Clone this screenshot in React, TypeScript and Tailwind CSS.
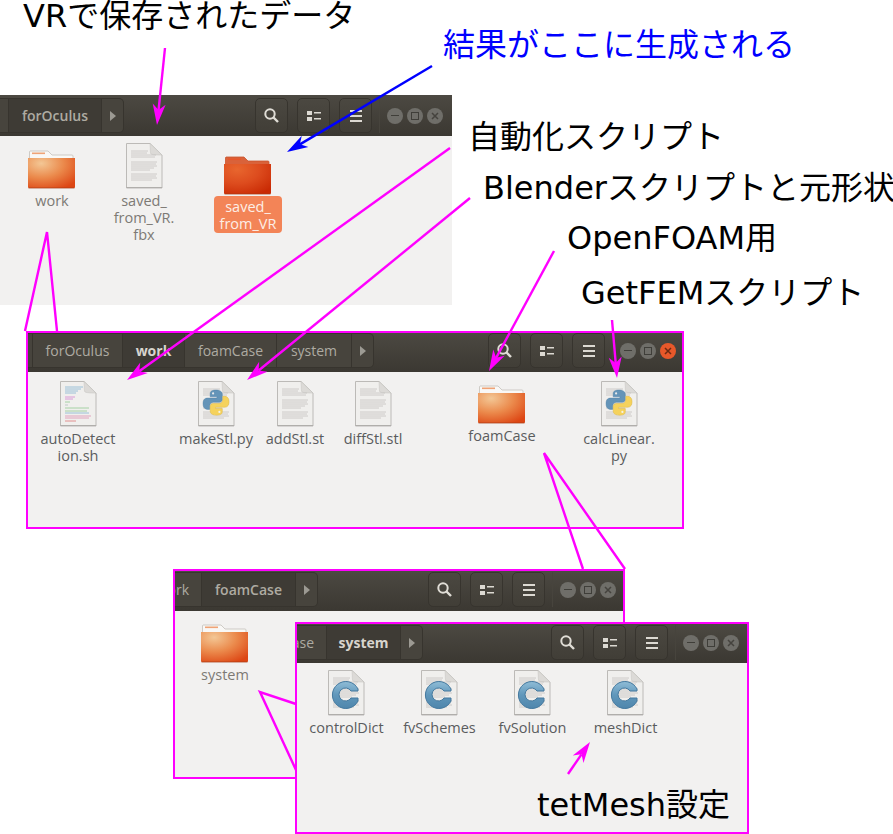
import React from "react";

const DEJAVU = { fontFamily: '"DejaVu Sans","Noto Sans CJK JP",sans-serif' };
const UI = { fontFamily: '"Open Sans",sans-serif' };

function Folder({ selected = false }: { selected?: boolean }) {
  const id = selected ? "s" : "n";
  return (
    <svg width="50" height="40" viewBox="0 0 50 40">
      <defs>
        <radialGradient id={`fg${id}`} cx="0.28" cy="0.18" r="0.95">
          <stop offset="0" stopColor={selected ? "#e8662e" : "#f3c795"} />
          <stop offset="0.5" stopColor={selected ? "#dd4c1e" : "#eb8a4c"} />
          <stop offset="1" stopColor={selected ? "#c92a04" : "#dd4614"} />
        </radialGradient>
      </defs>
      <path
        d="M3 2 H21 L25 6 H45 a1 1 0 0 1 1 1 V12 H2.500 V3 a1 1 0 0 1 .5-1z"
        fill={selected ? "#d9623a" : "#f9f8f6"}
        stroke={selected ? "#c9552e" : "#c4c0ba"}
        strokeWidth="0.8"
      />
      <rect x="5" y="3.500" width="13" height="1.600" fill={selected ? "#e8562a" : "#efa376"} />
      <path d="M1 9 H48 V38 a1 1 0 0 1-1 1 H2 a1 1 0 0 1-1-1z" fill={`url(#fg${id})`} />
      <path d="M1.500 39 H47.500" stroke="#a83c14" strokeWidth="1" opacity="0.75" />
    </svg>
  );
}

function PageBase({ children }: { children?: React.ReactNode }) {
  return (
    <svg width="37" height="46" viewBox="0 0 37 46">
      <path d="M.5 .5 H24 L36 12 V45 H.5z" fill="#f0efed" stroke="#bcbab7" strokeWidth="1" />
      <path d="M.5 44.500 H36" stroke="#b0aeab" strokeWidth="1.200" />
      <path d="M24 .5 C24.500 6 24 10 25 11 C27 12 32 12 36 12z" fill="#dcdad7" stroke="#c9c7c4" strokeWidth="0.6" />
      {children}
    </svg>
  );
}

function TextLines() {
  const rows: [number, number][] = [
    [8, 22], [10, 21], [12, 30], [14, 29],
    [19, 31], [21, 30], [23, 31], [25, 28], [27, 24],
    [31, 31], [33, 30], [35, 31], [37, 26],
  ];
  return (
    <g stroke="#c4c2bf" strokeWidth="0.8">
      {rows.map(([y, x2]) => (
        <line key={y} x1="5" x2={x2} y1={y} y2={y} />
      ))}
    </g>
  );
}

function TextIcon() {
  return (
    <PageBase>
      <TextLines />
    </PageBase>
  );
}

function ScriptIcon() {
  const rows: [number, string, number][] = [
    [6, "#5aa0c8", 18], [8, "#5aa0c8", 16], [10, "#5aa0c8", 13], [12, "#5aa0c8", 11],
    [16, "#c95cc8", 10], [18, "#c95cc8", 8], [21, "#6dbb6d", 5], [24, "#9aa", 3],
    [27, "#6dbb6d", 24], [30, "#6dbb6d", 22], [32, "#5aa0c8", 24], [35, "#d66a9a", 26],
    [37, "#d66a9a", 24], [40, "#d84a4a", 11],
  ];
  return (
    <PageBase>
      <g strokeWidth="0.8" opacity="0.7">
        {rows.map(([y, c, w]) => (
          <line key={y} x1="5" x2={5 + w} y1={y} y2={y} stroke={c} />
        ))}
      </g>
    </PageBase>
  );
}

function PyIcon() {
  return (
    <PageBase>
      <TextLines />
      <g transform="translate(2.500 1.500) scale(0.84)">
        <path d="M18.500 9 c-7 0-7 3-7 5 v3 h8 v1.500 H8 c-3.500 0-5 3-5 6.500 s1.500 7 5 7 h3 v-4 c0-2.500 2-4.500 4.500-4.500 h7 c2 0 3.500-1.500 3.500-3.500 V14 c0-3-3-5-7.500-5z" fill="#6494b8" stroke="#4d7fa5" strokeWidth="0.5" />
        <circle cx="15" cy="13" r="1.300" fill="#e8eaec" />
        <path d="M19 39 c7 0 7-3 7-5 v-3 h-8 v-1.500 h11 c3.500 0 5-3 5-6.500 s-1.500-6.500-5-6.500 h-2.500 v4 c0 2.500-2 4.500-4.500 4.500 h-7 c-2 0-3.500 1.500-3.500 3.500 V34 c0 3 3 5 7.500 5z" fill="#f5d25c" stroke="#d9b240" strokeWidth="0.5" />
        <circle cx="22.500" cy="35" r="1.300" fill="#f4f2e8" />
      </g>
    </PageBase>
  );
}

function CIcon() {
  return (
    <PageBase>
      <TextLines />
      <defs>
        <linearGradient id="cg" x1="0" y1="0" x2="0" y2="1">
          <stop offset="0" stopColor="#8fbcd6" />
          <stop offset="0.5" stopColor="#6097bb" />
          <stop offset="1" stopColor="#4f86ac" />
        </linearGradient>
      </defs>
      <path
        d="M30 19 A13.500 13.500 0 1 0 30 31 V28 H23 A6.500 6.500 0 1 1 23 21 H30z"
        fill="url(#cg)"
        stroke="#44799f"
        strokeWidth="1"
      />
    </PageBase>
  );
}

function FileItem({
  icon, label, selected = false, dark = false, className = "",
}: {
  icon: React.ReactNode; label: string; selected?: boolean; dark?: boolean; className?: string;
}) {
  return (
    <div className={`flex flex-col items-center ${className}`}>
      {icon}
      <div
        className={`whitespace-pre-line text-center text-[14.500px] leading-[17px] ${
          selected
            ? "mt-[1px] w-[68px] rounded bg-[#f38457] pb-[1px] pt-[2px] text-[#fdeee6]"
            : dark
              ? "mt-[3px] whitespace-nowrap text-[#5a5c5e]"
              : "mt-[3px] text-[#7d7a75]"
        }`}
        style={UI}
      >
        {label}
      </div>
    </div>
  );
}

function HBtn({ children }: { children: React.ReactNode }) {
  return (
    <div className="flex h-[35px] w-[33px] items-center justify-center rounded-[5px] border border-[#37342e] bg-gradient-to-b from-[#4b4841] to-[#413e37]">
      {children}
    </div>
  );
}

function Header({
  crumbs, active = false, heightClass, padClass, ctrlClass,
}: {
  crumbs: React.ReactNode; active?: boolean; heightClass: string; padClass: string; ctrlClass: string;
}) {
  const dim = "bg-[#6f6e69] text-[#3f3e39]";
  return (
    <div className={`flex shrink-0 items-end bg-gradient-to-b from-[#4c4942] to-[#3b3832] ${heightClass} ${padClass}`}>
      {crumbs}
      <div className="flex-1" />
      <div className="flex items-center gap-[9px]">
        <HBtn>
          <svg width="17" height="17" viewBox="0 0 17 17" fill="none" stroke="#e0ddd6" strokeWidth="2">
            <circle cx="7" cy="7" r="4.700" />
            <path d="M10.500 10.500 L15 15" strokeWidth="2.400" />
          </svg>
        </HBtn>
        <HBtn>
          <svg width="14" height="12" viewBox="0 0 14 12" fill="#dcd9d2">
            <rect x="0" y="1" width="5" height="4" />
            <rect x="0" y="7" width="5" height="4" />
            <rect x="7" y="2" width="7" height="1.500" />
            <rect x="7" y="8" width="7" height="1.500" />
          </svg>
        </HBtn>
        <HBtn>
          <svg width="12" height="12" viewBox="0 0 12 12" fill="#dcd9d2">
            <rect y="0" width="12" height="2" />
            <rect y="5" width="12" height="2" />
            <rect y="10" width="12" height="2" />
          </svg>
        </HBtn>
      </div>
      <div className={`ml-[7px] flex h-[35px] items-center gap-[4px] border-l border-[#47443d] pl-[7px] ${ctrlClass}`}>
        <div className={`flex size-[16px] items-center justify-center rounded-full ${dim}`}>
          <div className="h-[1.500px] w-[8px] bg-current" />
        </div>
        <div className={`flex size-[16px] items-center justify-center rounded-full ${dim}`}>
          <div className="size-[8px] border border-current" />
        </div>
        <div className={`flex size-[16px] items-center justify-center rounded-full ${active ? "bg-[#e8582a] text-[#6d2a12]" : "bg-[#6f6e69] text-[#45433e]"}`}>
          <svg width="8" height="8" viewBox="0 0 8 8" stroke="currentColor" strokeWidth="1.500">
            <path d="M1 1 L7 7 M7 1 L1 7" />
          </svg>
        </div>
      </div>
    </div>
  );
}

function Crumb({
  label, tone = "plain", widthClass, clipClass = "justify-center",
}: {
  label?: string; tone?: "plain" | "current" | "currentDim"; widthClass: string; clipClass?: string;
}) {
  const toneClass =
    tone === "current"
      ? "bg-[#3e3b35] font-bold text-[#d8d5ce]"
      : tone === "currentDim"
        ? "bg-[#3e3b35] font-semibold text-[#aeaba2]"
        : "bg-[#47443d] text-[#aeaba2]";
  return (
    <div
      className={`flex h-[35px] shrink-0 items-center overflow-hidden whitespace-nowrap border-y border-r border-[#37342e] text-[14px] ${toneClass} ${widthClass} ${clipClass}`}
      style={UI}
    >
      {label}
    </div>
  );
}

function Arrow() {
  return (
    <div className="flex h-[35px] w-[22px] shrink-0 items-center justify-center rounded-r-[5px] border border-l-0 border-[#37342e] bg-[#47443d]">
      <div className="h-0 w-0 border-y-[5px] border-l-[6px] border-y-transparent border-l-[#9c9a93]" />
    </div>
  );
}

function Win({
  x, y, w, h, border = false, children, header,
}: {
  x: number; y: number; w: number; h: number; border?: boolean; children: React.ReactNode; header: React.ReactNode;
}) {
  return (
    <div
      className={`absolute flex flex-col overflow-hidden bg-[#f2f1f0] ${border ? "border-2 border-[#ff00ff]" : ""}`}
      style={{ left: x, top: y, width: w, height: h }}
    >
      {header}
      <div className="flex-1">{children}</div>
    </div>
  );
}

function Note({ x, y, text, blue = false }: { x: number; y: number; text: string; blue?: boolean }) {
  return (
    <div
      className={`absolute whitespace-nowrap text-[32px] leading-[30px] ${blue ? "text-[#0000ff]" : "text-black"}`}
      style={{ left: x, top: y, ...DEJAVU }}
    >
      {text}
    </div>
  );
}

function Line({ p }: { p: string }) {
  return <polyline points={p} fill="none" stroke="#ff00ff" strokeWidth="2.400" />;
}

function Head({ x1, y1, x2, y2, c = "#ff00ff" }: { x1: number; y1: number; x2: number; y2: number; c?: string }) {
  const a = Math.atan2(y2 - y1, x2 - x1);
  const L = 21;
  const W = 6.5;
  const n = 15;
  const bx = x2 - L * Math.cos(a);
  const by = y2 - L * Math.sin(a);
  const mx = x2 - n * Math.cos(a);
  const my = y2 - n * Math.sin(a);
  const px = -Math.sin(a) * W;
  const py = Math.cos(a) * W;
  return (
    <>
      <line x1={x1} y1={y1} x2={mx} y2={my} stroke={c} strokeWidth="2.400" />
      <polygon points={`${x2},${y2} ${bx + px},${by + py} ${mx},${my} ${bx - px},${by - py}`} fill={c} />
    </>
  );
}

export default function App() {
  return (
    <div className="relative h-[834px] w-[893px] overflow-hidden bg-white">
      <Win
        x={0} y={95} w={452} h={210}
        header={
          <Header
            heightClass="h-[41px]" padClass="pb-[3px]" ctrlClass="mr-[9px]"
            crumbs={
              <div className="flex">
                <Crumb widthClass="w-[9px]" />
                <Crumb label="forOculus" tone="currentDim" widthClass="w-[93px]" />
                <Arrow />
              </div>
            }
          />
        }
      >
        <div className="flex items-start">
          <FileItem className="ml-[12px] mt-[13px] w-[80px]" icon={<Folder />} label="work" />
          <FileItem className="ml-[12px] mt-[7px] w-[80px]" icon={<TextIcon />} label={"saved_\nfrom_VR.\nfbx"} />
          <FileItem className="ml-[24px] mt-[19px] w-[80px]" icon={<Folder selected />} label={"saved_\nfrom_VR"} selected />
        </div>
      </Win>

      <Win
        x={173} y={569} w={452} h={210} border
        header={
          <Header
            heightClass="h-[40px]" padClass="pb-[4px]" ctrlClass="mr-[7px]"
            crumbs={
              <div className="flex">
                <Crumb label="ork" widthClass="w-[27px]" clipClass="justify-end pr-[12px]" />
                <Crumb label="foamCase" tone="currentDim" widthClass="w-[94px]" />
                <Arrow />
              </div>
            }
          />
        }
      >
        <FileItem className="ml-[10px] mt-[12px] w-[80px]" icon={<Folder />} label="system" />
      </Win>

      <Win
        x={295} y={622} w={454} h={212} border
        header={
          <Header
            heightClass="h-[39px]" padClass="pb-[3px]" ctrlClass="mr-[8px]"
            crumbs={
              <div className="flex">
                <Crumb label="ase" widthClass="w-[30px]" clipClass="justify-end pr-[12px]" />
                <Crumb label="system" tone="current" widthClass="w-[74px]" />
                <Arrow />
              </div>
            }
          />
        }
      >
        <div className="ml-[3px] mt-[7px] grid w-[372px] grid-cols-4">
          <FileItem icon={<CIcon />} label="controlDict" dark />
          <FileItem icon={<CIcon />} label="fvSchemes" dark />
          <FileItem icon={<CIcon />} label="fvSolution" dark />
          <FileItem icon={<CIcon />} label="meshDict" dark />
        </div>
      </Win>

      <Win
        x={26} y={331} w={658} h={198} border
        header={
          <Header
            active heightClass="h-[39px]" padClass="pb-[4px]" ctrlClass="mr-[6px]"
            crumbs={
              <div className="flex">
                <Crumb widthClass="w-[5px]" />
                <Crumb label="forOculus" widthClass="w-[90px]" />
                <Crumb label="work" tone="current" widthClass="w-[62px]" />
                <Crumb label="foamCase" widthClass="w-[92px]" />
                <Crumb label="system" widthClass="w-[75px]" />
                <Arrow />
              </div>
            }
          />
        }
      >
        <div className="flex items-start">
          <FileItem className="ml-[12px] mt-[9px] w-[76px]" icon={<ScriptIcon />} label={"autoDetect\nion.sh"} dark />
          <FileItem className="ml-[62px] mt-[9px] w-[76px]" icon={<PyIcon />} label="makeStl.py" dark />
          <FileItem className="ml-[3px] mt-[9px] w-[76px]" icon={<TextIcon />} label="addStl.st" dark />
          <FileItem className="ml-[2px] mt-[9px] w-[76px]" icon={<TextIcon />} label="diffStl.stl" dark />
          <FileItem className="ml-[53px] mt-[12px] w-[76px]" icon={<Folder />} label="foamCase" dark />
          <FileItem className="ml-[41px] mt-[9px] w-[76px]" icon={<PyIcon />} label={"calcLinear.\npy"} dark />
        </div>
      </Win>

      <svg className="pointer-events-none absolute left-0 top-0" width="893" height="834" viewBox="0 0 893 834">
        <Head x1={165} y1={48} x2={157} y2={125} />
        <Head x1={432} y1={66} x2={287} y2={152} c="#0000ff" />
        <Head x1={450} y1={148} x2={127} y2={380} />
        <Head x1={470} y1={198} x2={247} y2={380} />
        <Head x1={554} y1={251} x2={489} y2={371} />
        <Head x1={612} y1={320} x2={617} y2={378} />
        <Head x1={568} y1={774} x2={590} y2={742} />
        <Line p="25,331 47,232 57,331" />
        <Line p="583,569 544,453 625,569" />
        <Line p="296,704 260,692 296,770" />
      </svg>

      <Note x={23} y={1} text="VRで保存されたデータ" />
      <Note x={443} y={30} text="結果がここに生成される" blue />
      <Note x={468} y={122} text="自動化スクリプト" />
      <Note x={483} y={173} text="Blenderスクリプトと元形状" />
      <Note x={567} y={223} text="OpenFOAM用" />
      <Note x={581} y={278} text="GetFEMスクリプト" />
      <Note x={537} y={790} text="tetMesh設定" />
    </div>
  );
}
